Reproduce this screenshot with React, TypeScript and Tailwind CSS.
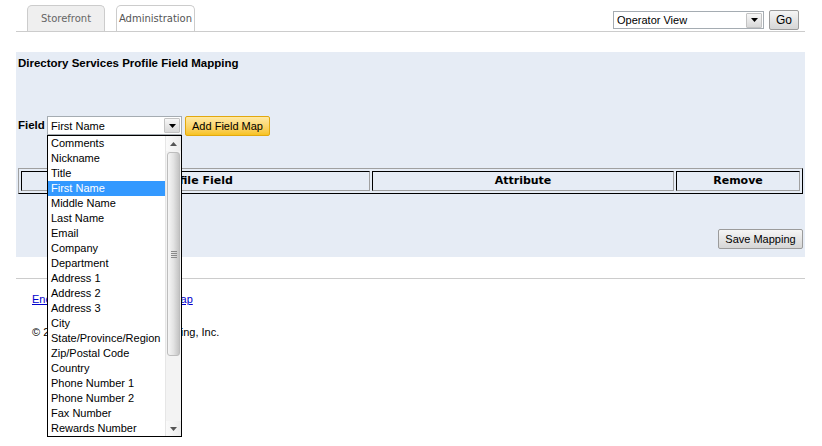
const fields = [
  'Comments',
  'Nickname',
  'Title',
  'First Name',
  'Middle Name',
  'Last Name',
  'Email',
  'Company',
  'Department',
  'Address 1',
  'Address 2',
  'Address 3',
  'City',
  'State/Province/Region',
  'Zip/Postal Code',
  'Country',
  'Phone Number 1',
  'Phone Number 2',
  'Fax Number',
  'Rewards Number',
]

function Arrow({ up = false, className = '' }: { up?: boolean; className?: string }) {
  return (
    <svg width="7" height="4" viewBox="0 0 7 4" className={className}>
      {up ? <polygon points="0,4 7,4 3.5,0" fill="currentColor" /> : <polygon points="0,0 7,0 3.5,4" fill="currentColor" />}
    </svg>
  )
}

function SelectBox({ value, width }: { value: string; width: string }) {
  return (
    <div className={`${width} h-full flex items-center border border-[#a5acb2] bg-white`}>
      <span className="flex-1 pl-[3px] pt-[1px] text-[11px] leading-none text-black truncate">{value}</span>
      <span className="w-[16px] h-[15px] mr-[1px] flex items-center justify-center border border-[#c3c3c3] rounded-[1px] bg-linear-to-b from-[#f7f7f7] to-[#d9d9d9] text-black">
        <Arrow />
      </span>
    </div>
  )
}

function Button({ children, yellow = false, className = '' }: { children: React.ReactNode; yellow?: boolean; className?: string }) {
  return (
    <button
      className={
        'h-[20px] flex items-center justify-center text-[11px] leading-none text-black rounded-[2px] border ' +
        (yellow
          ? 'border-[#e2a80f] bg-linear-to-b from-[#ffe9a3] to-[#f7c31c] '
          : 'border-[#9b9b9b] bg-linear-to-b from-[#f5f5f5] to-[#d6d6d6] ') +
        className
      }
    >
      {children}
    </button>
  )
}

function FieldList() {
  return (
    <div className="absolute left-0 top-full w-[135px] h-[302px] border border-black bg-white flex z-10">
      <ul className="flex-1">
        {fields.map((f) => (
          <li
            key={f}
            className={
              'h-[15px] leading-[15px] pl-[3px] text-[11px] whitespace-nowrap ' +
              (f === 'First Name' ? 'bg-[#3399ff] text-white' : 'text-black')
            }
          >
            {f}
          </li>
        ))}
      </ul>
      {/* scrollbar */}
      <div className="w-[16px] flex flex-col bg-[#f3f3f3] border-l border-[#e6e6e6]">
        <div className="h-[15px] flex items-center justify-center bg-linear-to-r from-[#fafafa] to-[#ececec] text-[#555]">
          <Arrow up />
        </div>
        <div className="flex-1 pt-[1px]">
          <div className="h-[204px] mx-[1px] rounded-[3px] border border-[#bdbdbd] bg-linear-to-r from-[#f6f6f6] via-[#e3e3e3] to-[#c4c4c4] flex items-center justify-center">
            <div className="flex flex-col gap-[1px]">
              <span className="block w-[6px] h-px bg-[#8a8a8a]" />
              <span className="block w-[6px] h-px bg-[#8a8a8a]" />
              <span className="block w-[6px] h-px bg-[#8a8a8a]" />
              <span className="block w-[6px] h-px bg-[#8a8a8a]" />
            </div>
          </div>
        </div>
        <div className="h-[15px] flex items-center justify-center bg-linear-to-r from-[#fafafa] to-[#ececec] text-[#555]">
          <Arrow />
        </div>
      </div>
    </div>
  )
}

const th =
  'h-[20px] p-0 text-center font-bold text-[11px] text-black border border-t-black border-l-black border-b-[#a0a0a0] border-r-[#a0a0a0] font-["DejaVu_Sans",sans-serif]'

export default function App() {
  return (
    <div className="w-[822px] h-[446px] bg-white overflow-hidden font-['Liberation_Sans',Arial,sans-serif] text-black">
      <div className="ml-[16px] w-[789px]">
        {/* top bar */}
        <div className="h-[32px] flex justify-between border-b border-[#cccccc]">
          <div className="flex items-end gap-[11px] pl-[11px]">
            <div className="w-[78px] h-[26px] flex items-center justify-center rounded-t-[5px] border border-b-0 border-[#cccccc] bg-[#efefef] text-[10px] text-[#666] font-['DejaVu_Sans',sans-serif]">
              Storefront
            </div>
            <div className="w-[79px] h-[26px] flex items-center justify-center rounded-t-[5px] border border-b-0 border-[#cccccc] bg-white text-[10px] text-[#555] font-['DejaVu_Sans',sans-serif]">
              Administration
            </div>
          </div>
          <div className="flex items-start gap-[5px] pr-[6px]">
            <div className="mt-[11px] h-[18px]">
              <SelectBox value="Operator View" width="w-[151px]" />
            </div>
            <Button className="mt-[10px] w-[30px] h-[19px] text-[12px]">Go</Button>
          </div>
        </div>

        {/* panel */}
        <div className="mt-[20px] bg-[#e6ecf5] px-[2px] pt-[4px] pb-[8px]">
          <h2 className="text-[11.5px] leading-[14px] font-bold">Directory Services Profile Field Mapping</h2>

          <div className="mt-[46px] h-[20px] flex items-center">
            <span className="w-[29px] text-[11.5px] font-bold">Field</span>
            <div className="relative h-[19px] self-start">
              <SelectBox value="First Name" width="w-[135px]" />
              <FieldList />
            </div>
            <Button yellow className="ml-[3px] w-[85px]">
              Add Field Map
            </Button>
          </div>

          <table className="mt-[32px] w-full border-separate border-spacing-[2px] border border-t-[#a0a0a0] border-l-[#a0a0a0] border-b-black border-r-black">
            <thead>
              <tr>
                <th className={th + ' w-[349px]'}>Profile Field</th>
                <th className={th + ' w-[302px]'}>Attribute</th>
                <th className={th}>Remove</th>
              </tr>
            </thead>
          </table>

          <div className="mt-[35px] flex justify-end">
            <Button className="w-[85px]">Save Mapping</Button>
          </div>
        </div>

        <div className="mt-[21px] h-px bg-[#cccccc]" />

        <div className="pl-[16px] mt-[13px] text-[11px] leading-[14px]">
          <a href="#" className="text-[#0000cc] underline">
            Encompass Storefronts Site Map
          </a>
        </div>
        <div className="pl-[16px] mt-[19px] text-[11px] leading-[14px]">© 2009 Encompass Ad Marketing, Inc.</div>
      </div>
    </div>
  )
}
